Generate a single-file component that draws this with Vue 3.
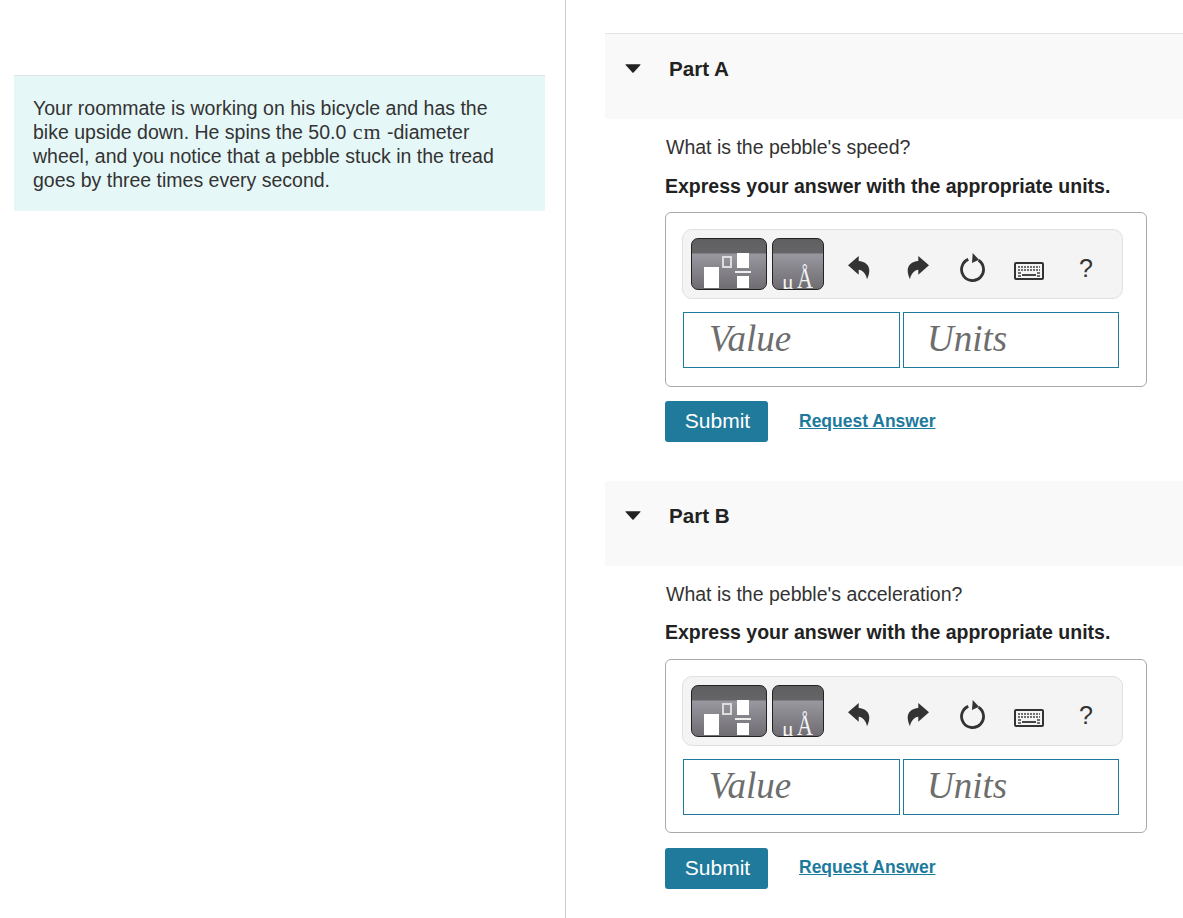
<script setup>
const parts = [
  { name: 'Part A', question: "What is the pebble's speed?", first: true },
  { name: 'Part B', question: "What is the pebble's acceleration?", first: false },
]
</script>

<template>
  <div class="page">
    <aside class="left">
      <div class="intro">
        Your roommate is working on his bicycle and has the bike upside down. He spins the 50.0 <span class="math">cm</span> -diameter wheel, and you notice that a pebble stuck in the tread goes by three times every second.
      </div>
    </aside>
    <main class="right">
      <section v-for="p in parts" :key="p.name" class="part" :class="{ later: !p.first }">
        <header class="part-head" :class="{ first: p.first }">
          <svg class="caret" width="16" height="9" viewBox="0 0 16 9"><path d="M1 0.2H15Q16 0.2 15.4 1L8.6 8.6Q8 9 7.4 8.6L0.6 1Q0 0.2 1 0.2Z" fill="#222" /></svg>
          <h2>{{ p.name }}</h2>
        </header>
        <div class="part-body">
          <p class="question">{{ p.question }}</p>
          <p class="instr">Express your answer with the appropriate units.</p>
          <div class="answer">
            <div class="toolbar">
              <div class="tpl wide">
                <svg width="76" height="52" viewBox="0 0 76 52">
                  <rect x="13" y="29" width="15" height="21" fill="#fff" />
                  <rect x="32" y="19" width="8" height="10" fill="none" stroke="#ddd" stroke-width="2" />
                  <rect x="46" y="15" width="12" height="15" fill="#fff" />
                  <rect x="44" y="33" width="16" height="2" fill="#eee" />
                  <rect x="46" y="38" width="12" height="12" fill="#fff" />
                </svg>
              </div>
              <div class="tpl narrow">
                <span class="mu">μ</span><span class="ang">Å</span>
              </div>
              <svg class="ic undo" width="22" height="24" viewBox="0 0 22 24">
                <path d="M0 9.3 10.7 0V5C17 5.5 21.5 9 21.3 15 21.2 18 20 21 19 23.3 18.5 19 15 14 10.7 13.7V18.7Z" fill="#333" />
              </svg>
              <svg class="ic redo" width="22" height="24" viewBox="0 0 22 24">
                <path d="M22 9.3 11.3 0V5C5 5.5 .5 9 .7 15 .8 18 2 21 3 23.3 3.5 19 7 14 11.3 13.7V18.7Z" fill="#333" />
              </svg>
              <svg class="ic reset" width="26" height="30" viewBox="0 0 26 30">
                <path d="M8.3 6.4A11 11 0 1 0 18.5 7.3" fill="none" stroke="#333" stroke-width="2.8" />
                <path d="M12.7 0 19 6.7 12 10Z" fill="#333" />
              </svg>
              <svg class="ic kbd" width="30" height="18" viewBox="0 0 30 18">
                <rect x="1" y="1" width="28" height="16" rx="1" fill="#f4f4f4" stroke="#333" stroke-width="2" />
                <path d="M4 5H26M4 8H26" stroke="#444" stroke-width="1.5" stroke-dasharray="2 1" />
                <path d="M4 11H7M23 11H26M4 14H7M23 14H26" stroke="#444" stroke-width="1.5" />
                <path d="M8 13H22" stroke="#333" stroke-width="1.8" />
              </svg>
              <span class="help">?</span>
            </div>
            <div class="fields">
              <div class="field">Value</div>
              <div class="field units">Units</div>
            </div>
          </div>
          <div class="actions">
            <button class="submit" type="button">Submit</button>
            <a class="req" href="#">Request Answer</a>
          </div>
        </div>
      </section>
    </main>
  </div>
</template>

<style scoped>
.page {
  display: flex;
  height: 918px;
  overflow: hidden;
  font-family: "Liberation Sans", Arial, sans-serif;
  color: #333;
}
.left {
  width: 565px;
  flex: none;
  box-sizing: border-box;
  padding: 75px 20px 0 14px;
}
.right {
  flex: 1;
  border-left: 1px solid #ccc;
  padding: 33px 0 0 39px;
  min-width: 0;
}
.intro {
  height: 136px;
  box-sizing: border-box;
  background: #e6f7f8;
  border-top: 1px solid #dfe3e6;
  padding: 20px 30px 0 19px;
  font-size: 19.5px;
  line-height: 24px;
}
.math {
  font-family: "Liberation Serif", "Times New Roman", serif;
  font-size: 22px;
  line-height: 0;
  letter-spacing: 1px;
  margin-left: 1px;
}
.part {
  margin-bottom: 39px;
}
.part-head {
  height: 85px;
  box-sizing: border-box;
  background: #f9f9f9;
  display: flex;
  align-items: flex-start;
  padding: 23px 0 0 20px;
}
.part-head.first {
  height: 86px;
  border-top: 1px solid #e2e2e2;
}
.caret {
  margin-top: 7px;
}
.part-head h2 {
  margin: 0 0 0 28px;
  font-size: 20.6px;
  line-height: 24px;
  font-weight: 700;
  color: #222;
}
.part-body {
  padding-left: 60px;
  width: 482px;
}
.question {
  margin: 0;
  padding: 16px 0 0 1px;
  font-size: 19.5px;
  line-height: 24px;
}
.instr {
  margin: 16px 0 14px;
  font-size: 19.5px;
  line-height: 23px;
  font-weight: 700;
  color: #222;
  white-space: nowrap;
}
.later .instr {
  margin: 15px 0 15px;
}
.answer {
  height: 175px;
  box-sizing: border-box;
  border: 1px solid #aaa;
  border-radius: 6px;
  padding: 16px 0 0 16px;
}
.later .answer {
  height: 174px;
}
.toolbar {
  height: 70px;
  width: 441px;
  box-sizing: border-box;
  background: #f4f4f4;
  border: 1px solid #e0e0e0;
  border-radius: 10px;
  display: flex;
  align-items: flex-start;
  padding: 8px 0 0 8px;
}
.tpl {
  height: 52px;
  box-sizing: border-box;
  border: 1px solid #222;
  border-radius: 7px;
  background: linear-gradient(#5f5f61 0, #656567 14px, #99979f 15px, #6f6d72 100%);
  overflow: hidden;
  position: relative;
}
.tpl svg {
  display: block;
  margin: -1px;
}
.wide {
  width: 76px;
}
.narrow {
  width: 52px;
  margin-left: 5px;
  font-family: "Liberation Serif", serif;
  color: #f4f4f4;
}
.mu {
  position: absolute;
  left: 9px;
  bottom: -3px;
  font-size: 22px;
  line-height: 20px;
}
.ang {
  position: absolute;
  left: 24px;
  bottom: -9px;
  font-size: 22px;
  line-height: 30px;
  transform: scaleY(1.3);
  transform-origin: 50% 100%;
}
.ic {
  flex: none;
}
.undo {
  margin: 18px 0 0 24px;
}
.redo {
  margin: 18px 0 0 37px;
}
.reset {
  margin: 15px 0 0 31px;
}
.kbd {
  margin: 24px 0 0 28px;
}
.help {
  margin: 12px 0 0 35px;
  font-size: 25px;
  line-height: 36px;
  color: #333;
}
.fields {
  display: flex;
  gap: 3px;
  margin: 13px 0 0 1px;
}
.field {
  width: 217px;
  height: 56px;
  box-sizing: border-box;
  border: 1px solid #1f7a9c;
  padding-left: 25px;
  font-family: "Liberation Serif", "Times New Roman", serif;
  font-style: italic;
  font-size: 37px;
  line-height: 52px;
  color: #6d6d6d;
}
.field.units {
  width: 216px;
  padding-left: 23px;
}
.actions {
  display: flex;
  align-items: center;
  margin-top: 14px;
}
.later .actions {
  margin-top: 15px;
}
.submit {
  width: 103px;
  height: 41px;
  border: 0;
  border-radius: 3px;
  background: #1f7a9c;
  color: #fff;
  font-family: inherit;
  font-size: 21px;
  padding: 0 0 2px 2px;
}
.req {
  margin-left: 31px;
  font-size: 17.5px;
  font-weight: 700;
  color: #1c7a9c;
}
.later .req {
  margin-bottom: 2px;
}
</style>
